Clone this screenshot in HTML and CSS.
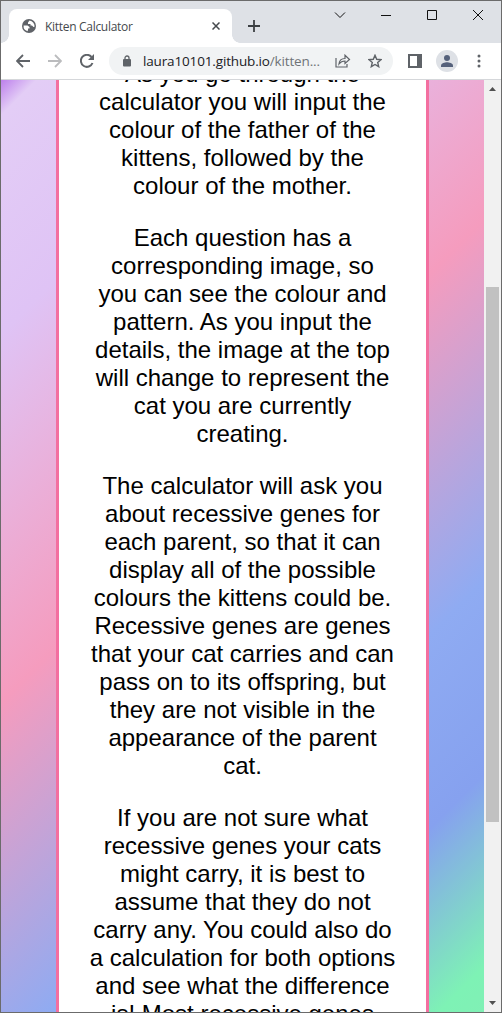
FILE: index.html
```html
<!DOCTYPE html>
<html lang="en">
<head>
<meta charset="utf-8">
<title>Kitten Calculator</title>
<link rel="stylesheet" href="styles.css">
</head>
<body>
<div class="window">
  <header class="titlebar">
    <div class="tab">
      <svg class="globe" width="14" height="14" viewBox="0 0 14 14"><circle cx="7" cy="7" r="7" fill="#5f6368"/><path d="M7.500 1.600 6 3.500V5H8.500V6.500H10L11.500 8H12.400A5.500 5.500 0 0 0 7.500 1.600M1.600 6.500H5.500L7.500 8V9.500H6V11L5.500 12.200A5.500 5.500 0 0 1 1.600 6.500" fill="#fff"/></svg>
      <span class="tab-title">Kitten Calculator</span>
      <svg class="tab-close" width="8" height="8" viewBox="0 0 8 8"><path d="m.5.5 7 7m0-7-7 7" stroke="#45494d" stroke-width="1.500"/></svg>
    </div>
    <svg class="new-tab" width="12" height="12" viewBox="0 0 12 12"><path d="M6 0v12M0 6h12" stroke="#3c4043" stroke-width="1.800"/></svg>
    <div class="controls">
      <svg width="12" height="12" viewBox="0 0 12 12"><path d="m1 3.500 5 5 5-5"/></svg>
      <svg width="12" height="12" viewBox="0 0 12 12"><path d="M1 6.500h10"/></svg>
      <svg width="12" height="12" viewBox="0 0 12 12"><path d="M1.500 1.500h9v9h-9z"/></svg>
      <svg width="12" height="12" viewBox="0 0 12 12"><path d="m1 1 10 10m0-10L1 11"/></svg>
    </div>
  </header>
  <nav class="toolbar">
    <svg class="back" width="14" height="14" viewBox="0 0 14 14"><path d="M14 7H1.500M7 1 1 7l6 6" fill="none" stroke="#5f6368" stroke-width="1.800"/></svg>
    <svg class="forward" width="14" height="14" viewBox="0 0 14 14"><path d="M0 7h12.500M7 1l6 6-6 6" fill="none" stroke="#bbbcbe" stroke-width="1.800"/></svg>
    <svg class="reload" width="14" height="14" viewBox="0 0 14 14"><path d="M12.500 9A6 6 0 1 1 11.500 3" fill="none" stroke="#5f6368" stroke-width="2"/><path d="M14 0v6H8z" fill="#5f6368"/></svg>
    <div class="address">
      <svg class="lock" width="8" height="12" viewBox="0 0 8 12"><path d="M2 5V3a2 2 0 0 1 4 0v2" fill="none" stroke="#5f6368" stroke-width="1.300"/><rect y="4" width="8" height="7.500" rx="1" fill="#5f6368"/></svg>
      <div class="url"><span>laura10101.github.io</span><span class="path">/kitten...</span></div>
      <svg class="share" width="16" height="14" viewBox="0 0 16 14"><path d="M1 4v9h11v-3M4 10c.3-3.500 2.500-5.500 6-5.500V1.200l4.500 4.300L10 9.500V7C7 7 5.500 8 4 10z" fill="none" stroke="#5f6368" stroke-width="1.200"/></svg>
      <svg class="star" width="14" height="14" viewBox="0 0 14 14"><path d="m7 1.300 1.700 4 4.300.4-3.300 2.800 1 4.200L7 10.500l-3.700 2.200 1-4.200L1 5.700l4.300-.4z" fill="none" stroke="#5f6368" stroke-width="1.400"/></svg>
    </div>
    <svg class="panel" width="14" height="14" viewBox="0 0 14 14"><path d="M0 0h14v14H0zM2 2v10h7V2z" fill="#5f6368" fill-rule="evenodd"/></svg>
    <svg class="avatar" width="22" height="22" viewBox="0 0 22 22"><circle cx="11" cy="11" r="11" fill="#dee1e6"/><circle cx="11" cy="8" r="3" fill="#55617b"/><path d="M5 17v-1.500c0-2 4-3.200 6-3.200s6 1.200 6 3.200V17z" fill="#55617b"/></svg>
    <svg class="dots" width="4" height="14" viewBox="0 0 4 14" fill="#5f6368"><circle cx="2" cy="2" r="1.500"/><circle cx="2" cy="7" r="1.500"/><circle cx="2" cy="12" r="1.500"/></svg>
  </nav>
  <div class="viewport">
    <main class="backdrop">
      <article class="card">
        <p>As you go through the<br>calculator you will input the<br>colour of the father of the<br>kittens, followed by the<br>colour of the mother.</p>
        <p>Each question has a<br>corresponding image, so<br>you can see the colour and<br>pattern. As you input the<br>details, the image at the top<br>will change to represent the<br>cat you are currently<br>creating.</p>
        <p>The calculator will ask you<br>about recessive genes for<br>each parent, so that it can<br>display all of the possible<br>colours the kittens could be.<br>Recessive genes are genes<br>that your cat carries and can<br>pass on to its offspring, but<br>they are not visible in the<br>appearance of the parent<br>cat.</p>
        <p>If you are not sure what<br>recessive genes your cats<br>might carry, it is best to<br>assume that they do not<br>carry any. You could also do<br>a calculation for both options<br>and see what the difference<br>is! Most recessive genes</p>
      </article>
    </main>
    <aside class="scrollbar">
      <svg width="7" height="4" viewBox="0 0 7 4"><path d="M3.500 0 7 4H0z" fill="#505050"/></svg>
      <div class="track"><div class="thumb"></div></div>
      <svg width="7" height="4" viewBox="0 0 7 4"><path d="M0 0h7L3.500 4z" fill="#505050"/></svg>
    </aside>
  </div>
</div>
</body>
</html>
```
FILE: styles.css
```css
* { box-sizing: border-box; }
body { margin: 0; overflow: hidden; }
svg { display: block; flex: none; }
.window {
  width: 502px;
  height: 1013px;
  border: 1px solid #6b6b6b;
  display: flex;
  flex-direction: column;
  background: #fff;
  font-family: "Open Sans", "Noto Sans", sans-serif;
}
.titlebar {
  height: 42px;
  flex: none;
  display: flex;
  background: #dee1e6;
}
.tab {
  position: relative;
  width: 223px;
  height: 34px;
  margin: 8px 0 0 8px;
  border-radius: 8px 8px 0 0;
  background: #fff;
  display: flex;
  align-items: center;
  padding: 0 12px 0 13px;
}
.tab::before, .tab::after {
  content: "";
  position: absolute;
  bottom: 0;
  width: 8px;
  height: 8px;
}
.tab::before { left: -8px; background: radial-gradient(circle at 0 0, #dee1e6 7.5px, #fff 8px); }
.tab::after { right: -8px; background: radial-gradient(circle at 100% 0, #dee1e6 7.5px, #fff 8px); }
.tab-title { margin-left: 9px; font-size: 12px; color: #45494d; white-space: nowrap; letter-spacing: -0.3px; }
.tab-close { margin-left: auto; }
.new-tab { margin: 19px 0 0 16px; }
.controls { margin: 8px 17px 0 auto; display: flex; gap: 34px; }
.controls svg { fill: none; stroke: #111; stroke-width: 1; }
.toolbar {
  height: 37px;
  flex: none;
  border-bottom: 1px solid #d5d7da;
  display: flex;
  align-items: center;
  padding-left: 15px;
}
.forward { margin-left: 18px; }
.reload { margin-left: 18px; }
.address {
  width: 284px;
  height: 28px;
  margin-left: 15px;
  border-radius: 14px;
  background: #f1f3f4;
  display: flex;
  align-items: center;
  padding: 0 11px 0 14px;
}
.url { display: flex; margin-left: 12px; width: 186px; font-size: 13.5px; color: #202124; white-space: nowrap; letter-spacing: -0.15px; }
.path { color: #6f7378; }
.share { margin-left: 6px; }
.star { margin-left: auto; }
.panel { margin-left: 15px; }
.avatar { margin-left: 14px; }
.dots { margin-left: 19px; }
.viewport { flex: 1; min-height: 0; display: flex; }
.backdrop {
  width: 483px;
  overflow: hidden;
  display: flex;
  justify-content: center;
  background: linear-gradient(135deg, #bd80ec 0%, #e3cdf6 2.500%, #dfc3f5 18%, #f59cbe 44%, #8fabf2 69.500%, #86a1ef 83.200%, #7ef2b5 96.800%, #80f0b5 100%);
}
.card {
  width: 373px;
  border: solid #f36fa0;
  border-width: 0 3px;
  background: #fff;
  text-align: center;
  font: 24px/28px "Liberation Sans", Arial, sans-serif;
  color: #000;
}
.card p { margin: 0 0 24px; white-space: nowrap; }
.card p:first-child { margin-top: -20px; }
.scrollbar {
  width: 17px;
  background: #f1f1f1;
  display: flex;
  flex-direction: column;
  align-items: center;
  padding: 7px 0;
}
.track { flex: 1; width: 13px; }
.thumb { height: 535px; margin-top: 196px; background: #c1c1c1; }
```
